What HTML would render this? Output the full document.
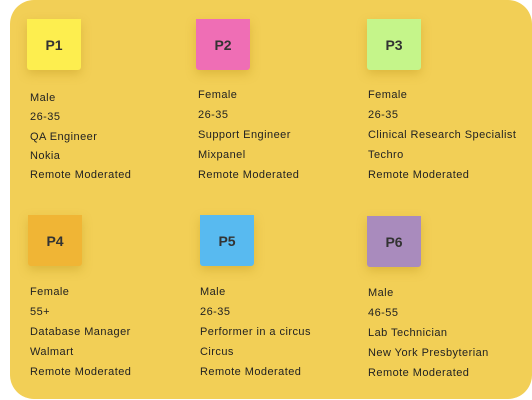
<!DOCTYPE html>
<html><head><style>
html,body{margin:0;padding:0;background:#fff;width:532px;height:400px;overflow:hidden}
.card{position:absolute;left:10px;top:0;width:522px;height:399px;background:#f2cf56;border-radius:24px}
.n{position:absolute;width:54px;height:51px;font:bold 14px "Liberation Sans",sans-serif;color:#333;display:flex;align-items:center;justify-content:center;box-shadow:0 4px 10px rgba(180,140,20,.35);border-radius:0 0 3px 3px}
.t{position:absolute;font:11px "Liberation Sans",sans-serif;letter-spacing:0.45px;color:#222;line-height:20px}
</style></head><body>
<div class="card"></div>
<div class="n" style="left:27px;top:19px;background:#fdee4f">P1</div>
<div class="n" style="left:196px;top:19px;background:#ef6eb5">P2</div>
<div class="n" style="left:367px;top:19px;background:#c5f58a">P3</div>
<div class="n" style="left:28px;top:215px;background:#f0b535">P4</div>
<div class="n" style="left:200px;top:215px;background:#58baf0">P5</div>
<div class="n" style="left:367px;top:216px;background:#a98bbd">P6</div>
<div class="t" style="left:30px;top:89px;line-height:19.3px">Male<br>26-35<br>QA Engineer<br>Nokia<br>Remote Moderated</div>
<div class="t" style="left:198px;top:85px">Female<br>26-35<br>Support Engineer<br>Mixpanel<br>Remote Moderated</div>
<div class="t" style="left:368px;top:85px">Female<br>26-35<br>Clinical Research Specialist<br>Techro<br>Remote Moderated</div>
<div class="t" style="left:30px;top:282px">Female<br>55+<br>Database Manager<br>Walmart<br>Remote Moderated</div>
<div class="t" style="left:200px;top:282px">Male<br>26-35<br>Performer in a circus<br>Circus<br>Remote Moderated</div>
<div class="t" style="left:368px;top:283px">Male<br>46-55<br>Lab Technician<br>New York Presbyterian<br>Remote Moderated</div>
</body></html>
